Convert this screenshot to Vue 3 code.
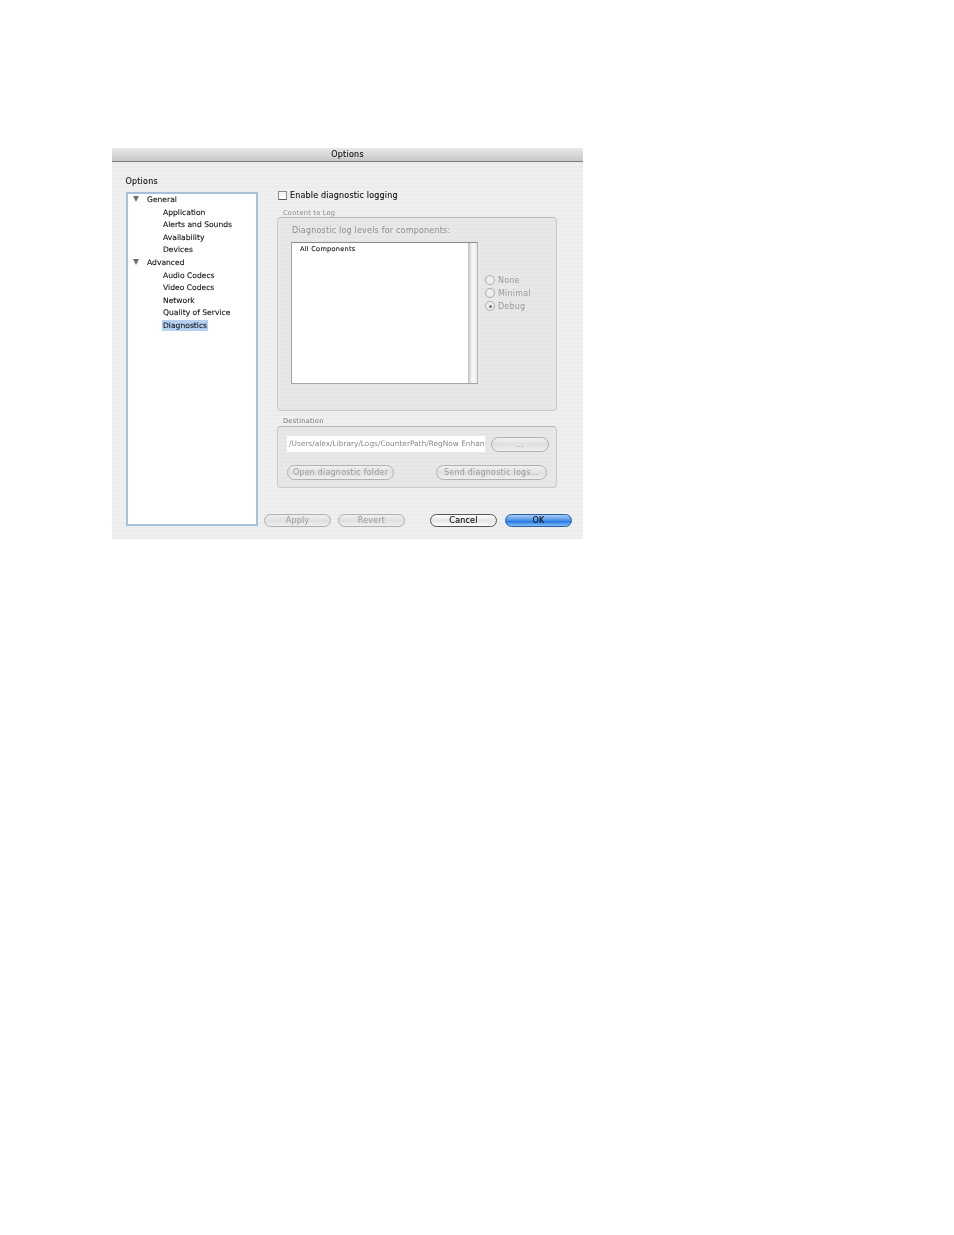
<script setup>
const tree = [
  { label: 'General', children: ['Application', 'Alerts and Sounds', 'Availability', 'Devices'] },
  { label: 'Advanced', children: ['Audio Codecs', 'Video Codecs', 'Network', 'Quality of Service', 'Diagnostics'] }
]
const levels = [
  { label: 'None', on: false },
  { label: 'Minimal', on: false },
  { label: 'Debug', on: true }
]
</script>

<template>
  <div class="page">
    <div class="window">
      <div class="titlebar">Options</div>
      <div class="body">
        <div class="left">
          <div class="left-title">Options</div>
          <div class="tree">
            <template v-for="g in tree" :key="g.label">
              <div class="row parent"><span class="tri"></span>{{ g.label }}</div>
              <div v-for="c in g.children" :key="c" class="row child">
                <span :class="{ sel: c === 'Diagnostics' }">{{ c }}</span>
              </div>
            </template>
          </div>
        </div>
        <div class="right">
          <div class="content">
            <label class="check"><span class="box"></span>Enable diagnostic logging</label>
            <div class="legend first">Content to Log</div>
            <div class="group g1">
              <div class="g1-title">Diagnostic log levels for components:</div>
              <div class="g1-row">
                <div class="list">
                  <div class="list-main">All Components</div>
                  <div class="scroll"></div>
                </div>
                <div class="radios">
                  <div v-for="l in levels" :key="l.label" class="radio">
                    <span class="dot" :class="{ on: l.on }"></span>{{ l.label }}
                  </div>
                </div>
              </div>
            </div>
            <div class="legend second">Destination</div>
            <div class="group g2">
              <div class="path-row">
                <div class="path">/Users/alex/Library/Logs/CounterPath/RegNow Enhan</div>
                <div class="btn small browse">...</div>
              </div>
              <div class="act-row">
                <div class="btn small open">Open diagnostic folder</div>
                <div class="btn small send">Send diagnostic logs...</div>
              </div>
            </div>
          </div>
          <div class="footer">
            <div class="btn foot">Apply</div>
            <div class="btn foot revert">Revert</div>
            <div class="btn foot cancel">Cancel</div>
            <div class="btn foot ok">OK</div>
          </div>
        </div>
      </div>
    </div>
  </div>
</template>

<style>
html, body { background: #fff; }
</style>

<style scoped>
.page {
  width: 954px;
  height: 1235px;
  padding: 148px 0 0 112px;
  box-sizing: border-box;
  font-family: "DejaVu Sans", sans-serif;
  overflow: hidden;
}
.window {
  width: 471px;
  height: 391px;
  display: flex;
  flex-direction: column;
  background: repeating-linear-gradient(180deg, #efefef 0, #efefef 2px, #ececec 2px, #ececec 4px);
  filter: blur(0.35px);
}
.titlebar {
  height: 13px;
  border-bottom: 1px solid #7d7d7d;
  border-radius: 4px 4px 0 0;
  background: linear-gradient(180deg, #e8e8e8, #c8c8c8);
  text-align: center;
  font-size: 8px;
  line-height: 13px;
  color: #111;
  letter-spacing: 0.25px;
  -webkit-text-stroke: 0.12px #111;
}
.body { flex: 1; display: flex; padding: 0 12px 0 14px; }
.left { width: 132px; }
.left-title {
  margin-top: 14px;
  height: 16px;
  font-size: 8px;
  line-height: 11px;
  color: #111;
  letter-spacing: 0.2px;
  margin-left: -0.5px;
  -webkit-text-stroke: 0.12px #111;
}
.tree {
  width: 132px;
  height: 334px;
  box-sizing: border-box;
  background: #fff;
  border: 2px solid #a3c2da;
  font-size: 7.6px;
  color: #111;
  -webkit-text-stroke: 0.1px #111;
}
.row { height: 12.6px; line-height: 12.6px; white-space: nowrap; }
.parent { position: relative; padding-left: 19px; }
.tri {
  position: absolute;
  left: 5px;
  top: 2px;
  border-left: 3.5px solid transparent;
  border-right: 3.5px solid transparent;
  border-top: 6px solid #6f6f6f;
}
.child { padding-left: 35px; }
.sel { background: #b5d2f3; padding: 1px 1px; margin-left: -1px; }
.right { flex: 1; margin-left: 6px; display: flex; flex-direction: column; }
.content { padding-left: 13px; width: 280px; }
.check {
  display: flex;
  align-items: center;
  margin-top: 27px;
  height: 12px;
  font-size: 8px;
  color: #111;
  letter-spacing: 0.18px;
  white-space: nowrap;
  margin-left: 1px;
  -webkit-text-stroke: 0.12px #111;
}
.box {
  width: 9px;
  height: 9px;
  box-sizing: border-box;
  margin-right: 3px;
  border: 1px solid #8a8a8a;
  border-bottom-color: #555;
  border-radius: 1px;
  background: linear-gradient(180deg, #f4f4f4, #fff);
}
.legend { font-size: 6.7px; color: #8a8a8a; padding-left: 6px; height: 8px; line-height: 8px; letter-spacing: 0.2px; }
.first { margin-top: 8px; }
.second { margin-top: 6px; color: #777; }
.group {
  box-sizing: border-box;
  border: 1px solid #cacaca;
  border-top-color: #b4b4b4;
  border-radius: 4px;
  background: repeating-linear-gradient(180deg, #e8e8e8 0, #e8e8e8 2px, #e5e5e5 2px, #e5e5e5 4px);
  width: 280px;
}
.g1 { height: 194px; padding: 7px 0 0 13px; }
.g1-title { font-size: 8px; line-height: 11px; height: 17px; color: #8d8d8d; letter-spacing: 0.2px; white-space: nowrap; padding-left: 1px; }
.g1-row { display: flex; }
.list {
  width: 187px;
  height: 142px;
  box-sizing: border-box;
  display: flex;
  background: #fff;
  border-top: 1px solid #8c8c8c;
  border-left: 1px solid #a5a5a5;
  border-right: 1px solid #b5b5b5;
  border-bottom: 1px solid #a5a5a5;
}
.list-main { flex: 1; padding: 2px 0 0 8px; font-size: 6.6px; line-height: 9px; color: #111; letter-spacing: 0.25px; -webkit-text-stroke: 0.1px #111; }
.scroll { width: 9px; background: linear-gradient(90deg, #bbb, #e8e8e8 30%, #fafafa 60%, #e8e8e8); }
.radios { margin: 32px 0 0 7px; }
.radio {
  display: flex;
  align-items: center;
  height: 13px;
  font-size: 8px;
  color: #9a9a9a;
  letter-spacing: 0.2px;
}
.dot {
  width: 10px;
  height: 10px;
  margin: -1px 3px 0 0;
  box-sizing: border-box;
  border: 1px solid #a9a9a9;
  border-radius: 50%;
  background: #eee;
  display: flex;
  align-items: center;
  justify-content: center;
}
.dot.on::after { content: ""; width: 3px; height: 3px; border-radius: 50%; background: #777; }
.g2 { height: 62px; margin-top: 1px; padding: 9px 0 0 9px; }
.path-row { display: flex; align-items: center; }
.path {
  width: 198px;
  height: 16px;
  box-sizing: border-box;
  background: #fff;
  font-size: 7.4px;
  line-height: 16px;
  padding-left: 2px;
  color: #8a8a8a;
  white-space: nowrap;
  overflow: hidden;
}
.btn {
  box-sizing: border-box;
  text-align: center;
  border: 1px solid #b0b0b0;
  border-radius: 8px;
  background: linear-gradient(180deg, #f0f0f0, #e0e0e0 50%, #efefef);
  color: #999;
  white-space: nowrap;
}
.small { height: 15px; line-height: 13px; font-size: 8px; letter-spacing: 0.2px; }
.browse { width: 58px; margin-left: 6px; }
.act-row { display: flex; margin-top: 13px; }
.open { width: 107px; }
.send { width: 111px; margin-left: 42px; }
.footer { display: flex; margin-top: 26px; }
.foot { width: 67px; height: 13px; line-height: 11px; font-size: 8px; letter-spacing: 0.2px; }
.revert { margin-left: 7px; }
.cancel {
  margin-left: 25px;
  color: #111;
  border-color: #555;
  background: linear-gradient(180deg, #fff, #e6e6e6 50%, #fbfbfb);
  -webkit-text-stroke: 0.15px #111;
}
.ok {
  margin-left: 8px;
  color: #111;
  border-color: #2a5ea8;
  background: linear-gradient(180deg, #a8cdf5, #4a90e8 50%, #1f74e2 55%, #7fc0f8);
  -webkit-text-stroke: 0.15px #111;
}
</style>
